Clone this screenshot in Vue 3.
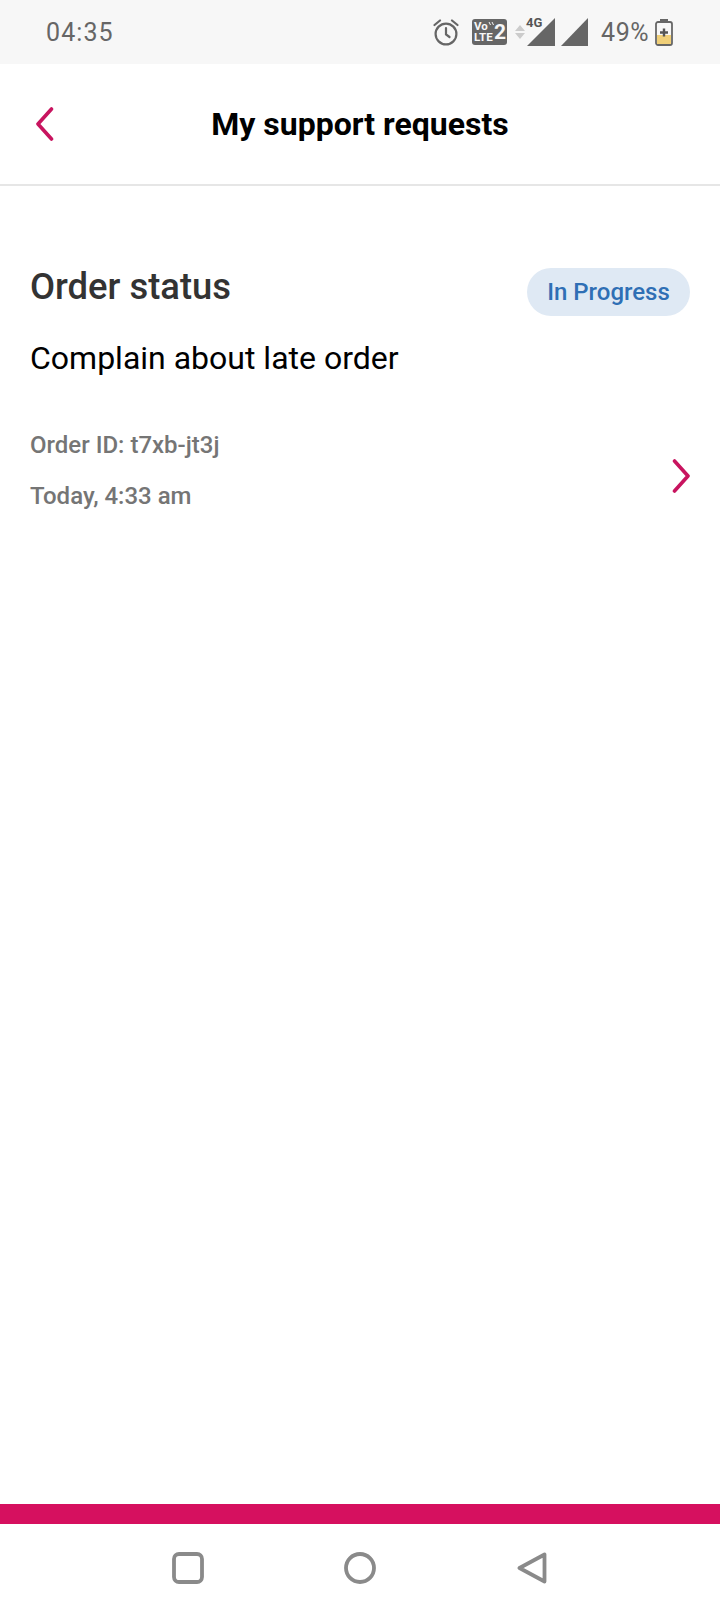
<script setup>
const brand = '#c8145f'
</script>

<template>
  <div class="screen">
    <div class="status">
      <span class="time">04:35</span>
      <div class="status-icons">
        <svg class="alarm" width="26" height="28" viewBox="0 0 26 28" fill="none" stroke="#666" stroke-width="2.200">
          <circle cx="13" cy="16" r="10.400" />
          <path d="M13 10v6.500l3.500 2.500" stroke-linecap="round" />
          <path d="M1.500 7 7 2.500M24.500 7 19 2.500" stroke-linecap="round" />
        </svg>
        <div class="volte">
          <div class="volte-left">
            <span class="vo">Vo<svg width="6" height="8" viewBox="0 0 6 8" fill="none" stroke="#f7f7f7" stroke-width="1"><path d="M1 1l1.500 3M4 1l1.500 3" /></svg></span>
            <span>LTE</span>
          </div>
          <span class="volte-num">2</span>
        </div>
        <svg class="arrows" width="10" height="14" viewBox="0 0 10 14" fill="#ccc">
          <path d="M5 0 10 6H0zM0 8h10L5 14z" />
        </svg>
        <div class="signal-4g">
          <span class="g4">4G</span>
          <svg width="28" height="28" viewBox="0 0 28 28" fill="#666"><path d="M28 0v28H0z" /></svg>
        </div>
        <svg class="signal2" width="27" height="28" viewBox="0 0 27 28" fill="#666"><path d="M27 0v28H0z" /></svg>
        <span class="pct">49%</span>
        <svg class="battery" width="18" height="28" viewBox="0 0 18 28">
          <rect x="1" y="4" width="16" height="23" rx="2" fill="#f7f7f7" stroke="#666" stroke-width="1.800" />
          <rect x="2" y="17" width="14" height="9" fill="#f0cf78" />
          <rect x="5" y="1" width="8" height="3" fill="#666" />
          <path d="M9 10.500v8M5 14.500h8" stroke="#555" stroke-width="2.400" />
        </svg>
      </div>
    </div>

    <header class="head">
      <svg class="back" width="18" height="34" viewBox="0 0 18 34" fill="none" :stroke="brand" stroke-width="3.600" stroke-linecap="round" stroke-linejoin="round">
        <path d="M15.500 2 2 17l13.500 15" />
      </svg>
      <h1 class="title">My support requests</h1>
    </header>

    <main class="body">
      <div class="row-top">
        <h2 class="status-title">Order status</h2>
        <span class="pill">In Progress</span>
      </div>
      <p class="subject">Complain about late order</p>
      <div class="row-meta">
        <div class="meta">
          <span>Order ID: t7xb-jt3j</span>
          <span>Today, 4:33 am</span>
        </div>
        <svg class="next" width="18" height="34" viewBox="0 0 18 34" fill="none" :stroke="brand" stroke-width="3.600" stroke-linecap="round" stroke-linejoin="round">
          <path d="M2.500 2 16 17 2.500 32" />
        </svg>
      </div>
    </main>

    <div class="pink"></div>
    <nav class="nav">
      <svg width="32" height="32" viewBox="0 0 32 32" fill="none" stroke="#8a8a8a" stroke-width="3.800">
        <rect x="2" y="2" width="28" height="28" rx="5" />
      </svg>
      <svg class="mid" width="32" height="32" viewBox="0 0 32 32" fill="none" stroke="#8a8a8a" stroke-width="3.800">
        <circle cx="16" cy="16" r="14" />
      </svg>
      <svg width="30" height="32" viewBox="0 0 30 32" fill="none" stroke="#8a8a8a" stroke-width="3.800" stroke-linejoin="round">
        <path d="M27.500 2.500v27L2.500 16z" />
      </svg>
    </nav>
  </div>
</template>

<style>
html, body { margin: 0; background: #fff; }
</style>

<style scoped>
.screen {
  width: 720px;
  height: 1612px;
  display: flex;
  flex-direction: column;
  font-family: Roboto, sans-serif;
  background: #fff;
  overflow: hidden;
}
.status {
  height: 64px;
  flex: none;
  background: #f7f7f7;
  display: flex;
  align-items: center;
  justify-content: space-between;
  padding: 0 47px 0 46px;
  box-sizing: border-box;
  color: #666;
}
.time { font-size: 25px; letter-spacing: 1.100px; }
.status-icons { display: flex; align-items: center; }
.alarm { margin-right: 13px; margin-top: 0; }
.volte {
  width: 35px;
  height: 26px;
  background: #666;
  border-radius: 3px;
  color: #f7f7f7;
  display: flex;
  align-items: center;
  justify-content: space-between;
  padding: 0 1px 0 2px;
  box-sizing: border-box;
  font-weight: 700;
  margin-right: 8px;
}
.volte-left {
  display: flex;
  flex-direction: column;
  font-size: 11.500px;
  line-height: 11.500px;
}
.vo { display: flex; align-items: flex-start; }
.volte-num { font-size: 21px; line-height: 22px; }
.arrows { margin-right: 2px; }
.signal-4g { position: relative; width: 28px; height: 28px; margin-right: 6px; }
.signal-4g svg { display: block; }
.g4 {
  position: absolute;
  left: -1px;
  top: -2px;
  font-size: 13px;
  line-height: 14px;
  font-weight: 700;
  color: #555;
}
.signal2 { margin-right: 13px; }
.pct { font-size: 25px; letter-spacing: 0.500px; margin-right: 6px; }
.battery { display: block; }
.head {
  height: 122px;
  flex: none;
  box-sizing: border-box;
  border-bottom: 2px solid #e6e6e6;
  display: flex;
  align-items: center;
  justify-content: center;
  position: relative;
}
.back { position: absolute; left: 36px; top: 43px; }
.title {
  margin: 0;
  font-size: 32px;
  font-weight: 700;
  color: #000;
}
.body {
  flex: 1;
  padding: 82px 30px 0;
  box-sizing: border-box;
}
.row-top {
  display: flex;
  justify-content: space-between;
  align-items: center;
  height: 48px;
}
.status-title {
  margin: 0;
  font-size: 36.400px;
  font-weight: 500;
  color: #333;
  position: relative;
  top: -6px;
}
.pill {
  width: 163px;
  height: 48px;
  border-radius: 24px;
  background: #dfe9f4;
  color: #2f6fb5;
  font-size: 24px;
  font-weight: 500;
  display: flex;
  align-items: center;
  justify-content: center;
}
.subject {
  margin: 22px 0 0;
  font-size: 32px;
  line-height: 40px;
  color: #000;
}
.row-meta {
  display: flex;
  justify-content: space-between;
  align-items: center;
  margin-top: 53px;
}
.meta {
  display: flex;
  flex-direction: column;
  gap: 22px;
  font-size: 24px;
  line-height: 29px;
  font-weight: 500;
  color: #757575;
}
.next { margin-top: 10px; }
.pink { height: 20px; flex: none; background: #d6105f; }
.nav {
  height: 88px;
  flex: none;
  display: flex;
  justify-content: center;
  align-items: center;
  padding-right: 1px;
  background: #fff;
}
.mid { margin: 0 141px 0 140px; }
</style>
